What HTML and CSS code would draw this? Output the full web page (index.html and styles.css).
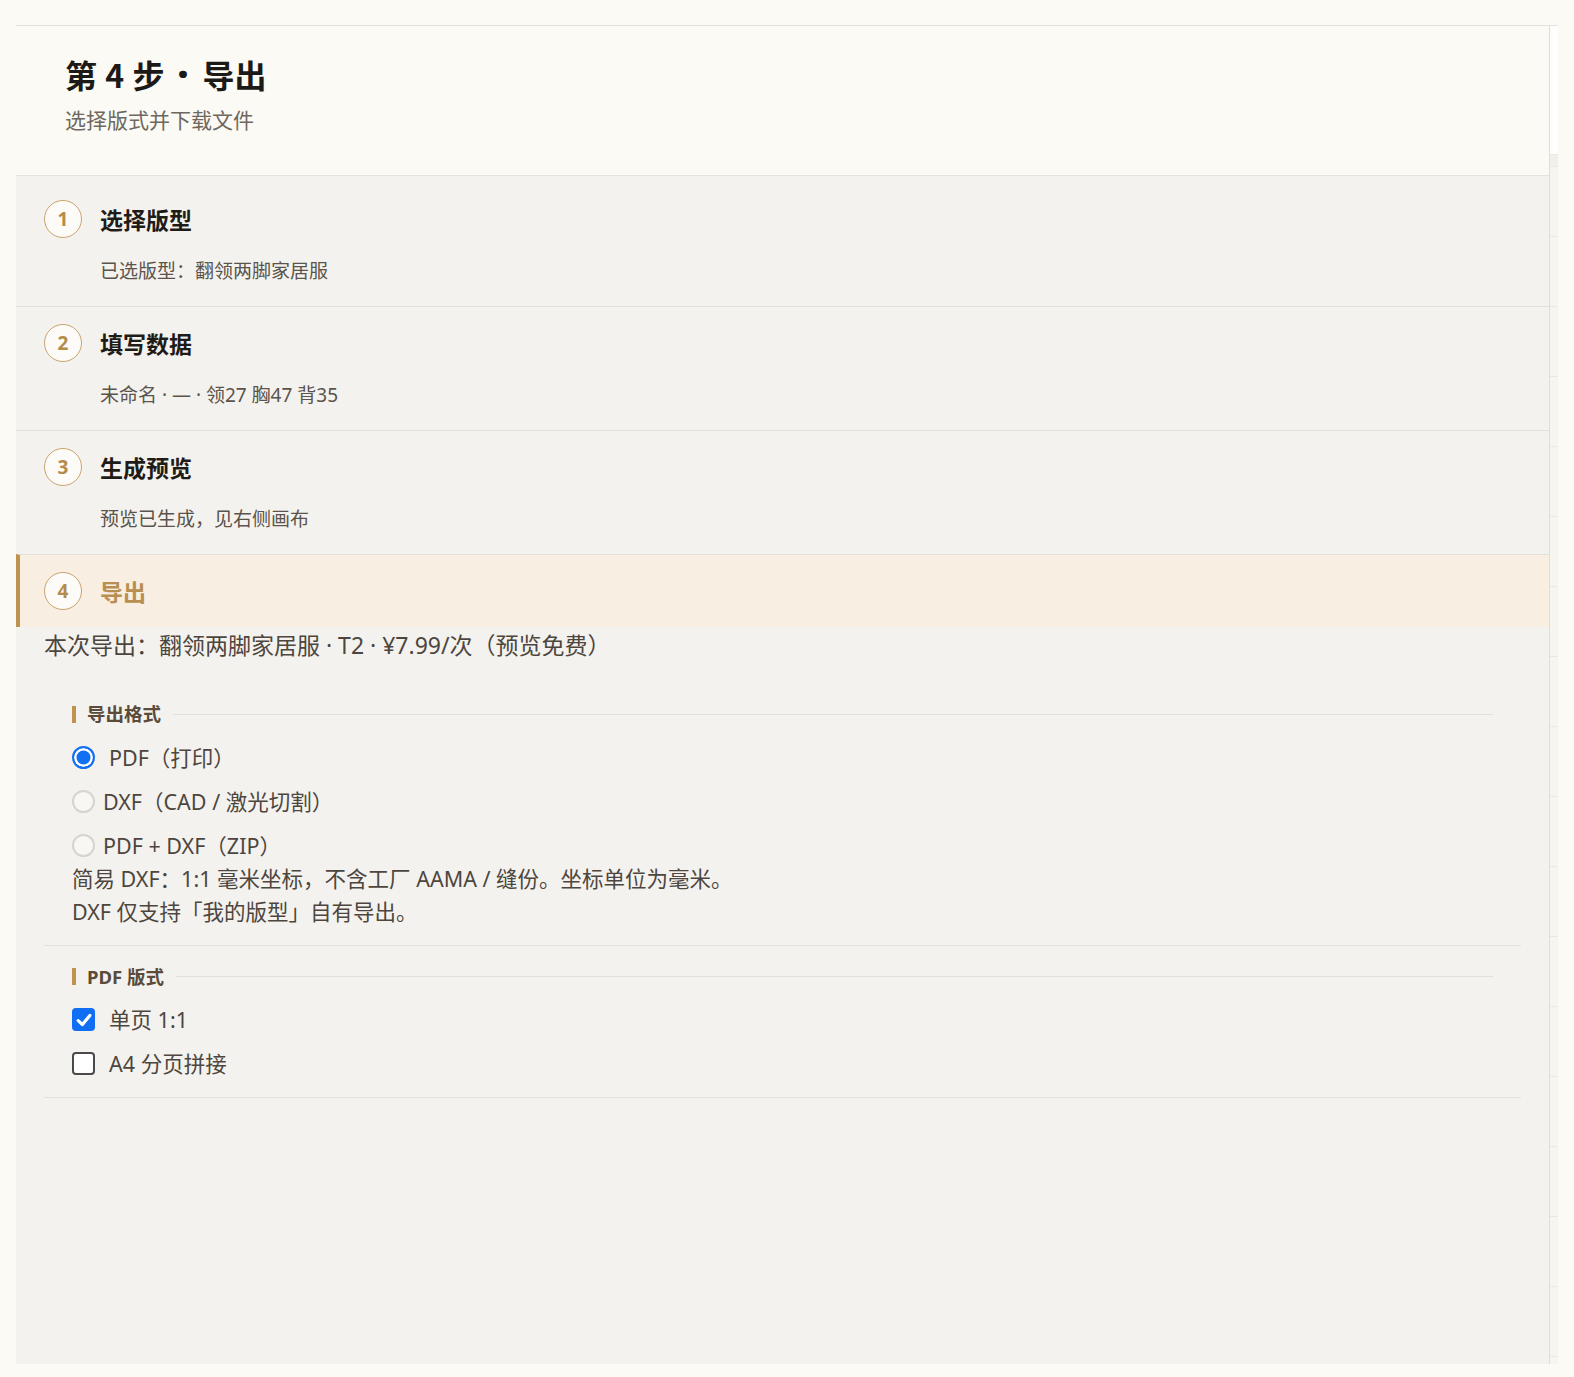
FILE: index.html
```html
<!DOCTYPE html>
<html lang="zh-CN">
<head>
<meta charset="utf-8">
<title>第 4 步 · 导出</title>
<link rel="stylesheet" href="styles.css">
</head>
<body>
<div class="frame">
  <main class="panel">
    <header class="head">
      <h1 class="head-title">第 4 步<span class="dot">·</span>导出</h1>
      <p class="head-sub">选择版式并下载文件</p>
    </header>
    <ol class="steps">
      <li class="step first">
        <div class="step-row"><span class="step-num">1</span><span class="step-title">选择版型</span></div>
        <div class="step-desc">已选版型：翻领两脚家居服</div>
      </li>
      <li class="step">
        <div class="step-row"><span class="step-num">2</span><span class="step-title">填写数据</span></div>
        <div class="step-desc">未命名 · — · 领27 胸47 背35</div>
      </li>
      <li class="step">
        <div class="step-row"><span class="step-num">3</span><span class="step-title">生成预览</span></div>
        <div class="step-desc">预览已生成，见右侧画布</div>
      </li>
      <li class="step active">
        <div class="step-row"><span class="step-num">4</span><span class="step-title">导出</span></div>
      </li>
    </ol>
    <div class="body">
      <p class="summary">本次导出：翻领两脚家居服 · T2 · ¥7.99/次（预览免费）</p>
      <section class="group">
        <h2 class="group-head"><span class="group-label">导出格式</span><span class="group-rule"></span></h2>
        <label class="opt"><span class="radio on"></span><span class="opt-text wide">PDF（打印）</span></label>
        <label class="opt"><span class="radio"></span><span class="opt-text">DXF（CAD / 激光切割）</span></label>
        <label class="opt"><span class="radio"></span><span class="opt-text">PDF + DXF（ZIP）</span></label>
        <p class="note">简易 DXF：1:1 毫米坐标，不含工厂 AAMA / 缝份。坐标单位为毫米。</p>
        <p class="note">DXF 仅支持「我的版型」自有导出。</p>
      </section>
      <section class="group">
        <h2 class="group-head"><span class="group-label">PDF 版式</span><span class="group-rule"></span></h2>
        <label class="opt"><span class="check on"><svg viewBox="0 0 22 22" width="22" height="22"><path d="M5.2 11.6 L9.4 15.6 L16.9 6.4" fill="none" stroke="#fff" stroke-width="3.2" stroke-linecap="round" stroke-linejoin="round"/></svg></span><span class="opt-text wide">单页 1:1</span></label>
        <label class="opt"><span class="check"></span><span class="opt-text wide">A4 分页拼接</span></label>
      </section>
    </div>
  </main>
  <aside class="sliver">
    <div class="sliver-head"></div>
    <div class="sliver-band"></div>
    <div class="sliver-row"></div>
    <div class="sliver-row"></div>
    <div class="sliver-row"></div>
    <div class="sliver-row"></div>
    <div class="sliver-row"></div>
    <div class="sliver-row"></div>
    <div class="sliver-row"></div>
    <div class="sliver-row"></div>
    <div class="sliver-row"></div>
    <div class="sliver-row"></div>
    <div class="sliver-row"></div>
    <div class="sliver-row"></div>
    <div class="sliver-row"></div>
    <div class="sliver-row"></div>
    <div class="sliver-row"></div>
    <div class="sliver-row"></div>
    <div class="sliver-row"></div>
    <div class="sliver-row"></div>
  </aside>
</div>
</body>
</html>
```
FILE: styles.css
```css
* { box-sizing: border-box; }
html, body { margin: 0; padding: 0; }
body {
  background: #fbfaf4;
  font-family: "Noto Sans", "Noto Sans CJK SC", sans-serif;
  color: #4d463e;
}
.frame {
  margin: 25px 16px 0 16px;
  width: 1542px;
  height: 1339px;
  border-top: 1px solid #e6e3dc;
  display: flex;
  overflow: hidden;
}
.panel {
  flex: 1;
  background: #f4f2ee;
  border-right: 1px solid #e0ddd6;
  display: flex;
  flex-direction: column;
}
.head {
  background: #fbfaf4;
  border-bottom: 1px solid #e6e3dc;
  padding: 28px 49px 42px;
}
.head-title {
  margin: 0;
  font-family: "Noto Sans CJK SC", sans-serif;
  font-weight: 700;
  font-size: 32px;
  line-height: 40px;
  color: #1c1916;
  word-spacing: 1px;
}
.dot {
  font-family: "Noto Sans", sans-serif;
  font-weight: 900;
  font-size: 38px;
  line-height: 30px;
  margin: 0 14px 0 13px;
}
.head-sub {
  margin: 11px 0 0;
  font-family: "Noto Sans CJK SC", sans-serif;
  font-size: 21px;
  line-height: 28px;
  color: #6e6860;
}
.steps {
  list-style: none;
  margin: 0;
  padding: 6px 0 0;
}
.step {
  border-top: 1px solid #e3e0da;
  padding: 17px 28px 21px;
}
.step.first { border-top-color: transparent; }
.step.active {
  background: #f8eee2;
  border-left: 4px solid #c0924f;
  padding: 17px 28px 17px 24px;
}
.step-row {
  display: flex;
  align-items: center;
  gap: 18px;
  height: 38px;
}
.step-num {
  width: 38px;
  height: 38px;
  border: 1.5px solid #c9a46e;
  border-radius: 50%;
  background: #fdfbf7;
  display: flex;
  align-items: center;
  justify-content: center;
  font-family: "Noto Sans", sans-serif;
  font-weight: 700;
  font-size: 19px;
  color: #b48b4c;
}
.step-title {
  font-family: "Noto Sans CJK SC", sans-serif;
  font-weight: 700;
  font-size: 23px;
  line-height: 30px;
  color: #1f1c18;
}
.step.active .step-title { color: #b88f50; }
.step-desc {
  margin: 19px 0 0 56px;
  font-size: 19px;
  line-height: 28px;
  color: #5a544c;
}
.body {
  padding: 0 28px;
}
.summary {
  margin: 0;
  font-size: 23px;
  line-height: 36px;
  color: #4d463e;
}
.group {
  margin-top: 20px;
  padding: 18px 28px 17px;
  border-bottom: 1px solid #e4e1db;
}
.group + .group { margin-top: 0; }
.group-head {
  margin: 0 0 13.5px;
  height: 26px;
  display: flex;
  align-items: center;
  gap: 12px;
}
.group-label {
  font-family: "Noto Sans", "Noto Sans CJK SC", sans-serif;
  font-weight: 700;
  font-size: 18.5px;
  line-height: 26px;
  color: #5a4b3a;
  border-left: 4px solid #c0924f;
  padding-left: 11px;
  height: 17px;
  display: flex;
  align-items: center;
}
.group-rule {
  flex: 1;
  height: 1px;
  background: #e2dfd9;
}
.opt {
  display: flex;
  align-items: center;
  height: 33px;
  margin-bottom: 11px;
}
.opt:nth-of-type(3) { margin-bottom: 0; }
.group .opt:last-child { margin-bottom: 0; }
.opt-text {
  font-size: 21.5px;
  line-height: 33px;
  color: #4d463e;
  margin-left: 8px;
}
.opt-text.wide { margin-left: 14px; }
.radio {
  width: 23px;
  height: 23px;
  border-radius: 50%;
  border: 2px solid #d6d4d0;
  background: #f8f7f4;
  flex: none;
}
.radio.on {
  border: 2.5px solid #1370f2;
  background: #1370f2;
  box-shadow: inset 0 0 0 2.5px #fff;
}
.check {
  width: 23px;
  height: 23px;
  border-radius: 4px;
  border: 2px solid #4a4a4a;
  background: #fff;
  flex: none;
  display: flex;
  align-items: center;
  justify-content: center;
}
.check.on {
  border: none;
  background: #0f6ef3;
}
.note {
  margin: 0;
  font-size: 21.5px;
  line-height: 33px;
  color: #4d463e;
}
.sliver {
  width: 8px;
  flex: none;
  background: #f6f5f0;
}
.sliver-head {
  height: 129px;
  background: #fefefc;
  border-bottom: 1px solid #ebe9e3;
}
.sliver-band {
  height: 12px;
  background: #f1f0eb;
  border-bottom: 1px solid #ebe9e3;
}
.sliver-row {
  height: 70px;
  border-bottom: 1px solid #ebe9e3;
}
```
